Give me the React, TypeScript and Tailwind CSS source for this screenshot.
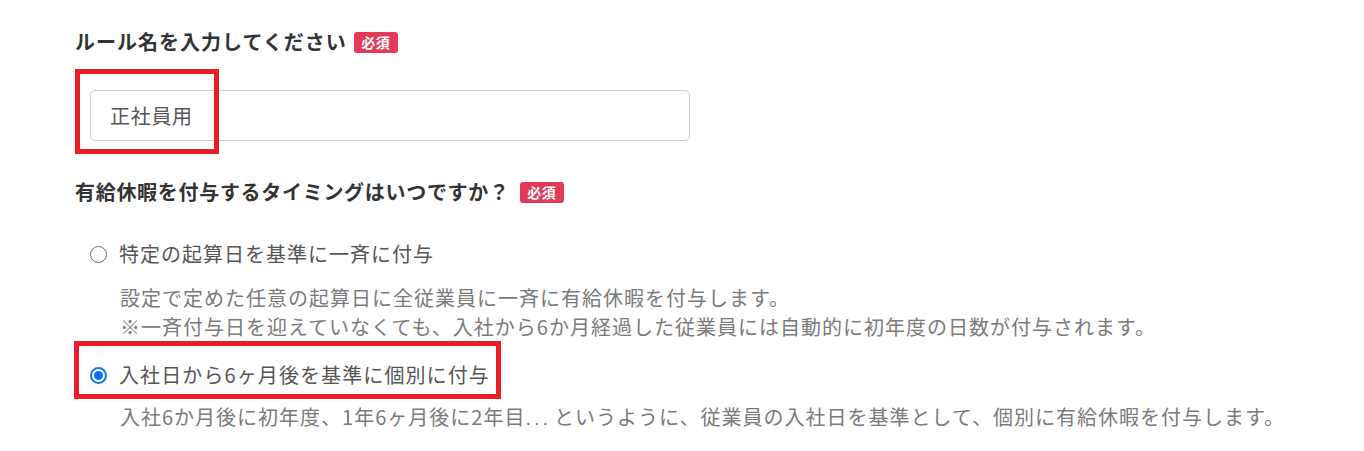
import React from "react";

const font = { fontFamily: '"Noto Sans CJK JP", "Noto Sans", sans-serif' };

function Badge() {
  return (
    <span className="inline-flex items-center justify-center w-[44px] h-[21px] rounded-[3px] bg-[#e43a5a] text-white text-[14px] font-bold leading-none tracking-[0.5px]">
      必須
    </span>
  );
}

function Radio({ checked }: { checked: boolean }) {
  return checked ? (
    <span className="flex items-center justify-center w-[17px] h-[17px] rounded-full border-[2px] border-[#1a73e8] bg-white">
      <span className="w-[9px] h-[9px] rounded-full bg-[#0b6ff7]" />
    </span>
  ) : (
    <span className="block w-[17px] h-[17px] rounded-full border-[1.5px] border-[#6b6b6b] bg-white" />
  );
}

export default function App() {
  return (
    <div className="relative w-[1364px] h-[451px] bg-white overflow-hidden" style={font}>
      <div className="pl-[75px] pt-[27px] text-[20px] tracking-[0.7px]">
        <div className="flex items-center gap-[7px] h-[30px]">
          <span className="font-bold text-[#333] tracking-[1px]">ルール名を入力してください</span>
          <Badge />
        </div>

        <div className="mt-[33px] ml-[15px] w-[600px] h-[51px] border border-[#cfcfcf] rounded-[5px] flex items-center pl-[19px] text-[#555]">
          正社員用
        </div>

        <div className="mt-[36px] flex items-center gap-[10px] h-[30px]">
          <span className="font-bold text-[#333]">有給休暇を付与するタイミングはいつですか？</span>
          <Badge />
        </div>

        <div className="mt-[32px] flex items-center h-[30px] pl-[15px] gap-[12px]">
          <Radio checked={false} />
          <span className="text-[#555] tracking-[1px]">特定の起算日を基準に一斉に付与</span>
        </div>

        <div className="mt-[14px] pl-[45px] text-[#7a7a7a] leading-[29px] tracking-[1px]">
          <p>設定で定めた任意の起算日に全従業員に一斉に有給休暇を付与します。</p>
          <p>※一斉付与日を迎えていなくても、入社から6か月経過した従業員には自動的に初年度の日数が付与されます。</p>
        </div>

        <div className="mt-[19px] flex items-center h-[30px] pl-[15px] gap-[12px]">
          <Radio checked={true} />
          <span className="text-[#555] tracking-[1.1px]">入社日から6ヶ月後を基準に個別に付与</span>
        </div>

        <div className="mt-[12px] pl-[45px] text-[#7a7a7a] leading-[29px] tracking-[1px]">
          <p>
            入社6か月後に初年度、1年6ヶ月後に2年目<span className="tracking-[3px] pr-[3px]" style={{ fontFamily: '"Liberation Sans", sans-serif' }}>...</span>というように、従業員の入社日を基準として、個別に有給休暇を付与します。
          </p>
        </div>
      </div>

      <div className="absolute left-[75px] top-[69px] w-[144px] h-[85px] border-[5px] border-[#ec1c24]" />
      <div className="absolute left-[74px] top-[341px] w-[427px] h-[58px] border-[5px] border-[#ec1c24]" />
    </div>
  );
}
